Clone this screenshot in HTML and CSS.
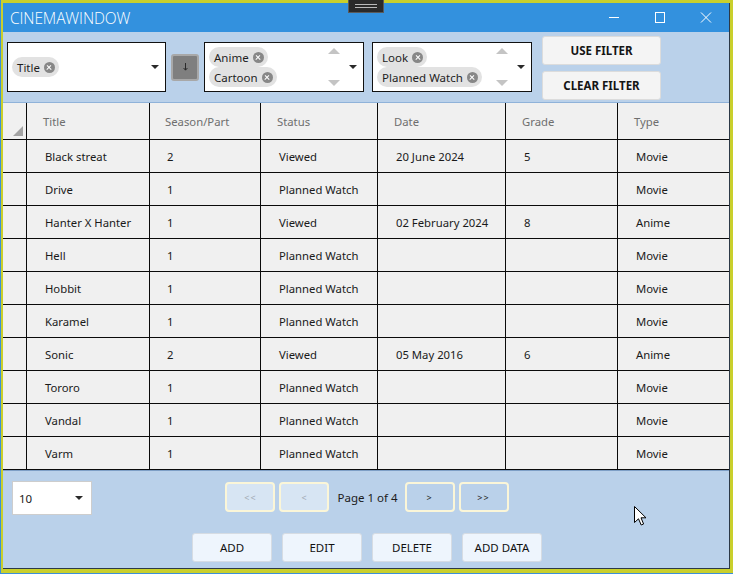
FILE: index.html
```html
<!DOCTYPE html>
<html>
<head>
<meta charset="utf-8">
<link rel="stylesheet" href="styles.css">
</head>
<body>
<div class="outer">
  <div class="window">
    <div class="grip"><span></span><span></span></div>
    <div class="titlebar">
      <div class="title">CINEMAWINDOW</div>
      <div class="controls">
        <svg class="ctl" width="46" height="29" viewBox="0 0 46 29"><line x1="18" y1="14.5" x2="28" y2="14.5" stroke="#fff" stroke-width="1"/></svg>
        <svg class="ctl" width="46" height="29" viewBox="0 0 46 29"><rect x="18.5" y="9.5" width="9" height="10" fill="none" stroke="#fff" stroke-width="1"/></svg>
        <svg class="ctl" width="46" height="29" viewBox="0 0 46 29"><path d="M18 9.5 L28 19.5 M28 9.5 L18 19.5" stroke="#fff" stroke-width="1"/></svg>
      </div>
    </div>

    <div class="filters">
      <div class="combo c1">
        <div class="chips single">
          <span class="chip">Title<i class="x"></i></span>
        </div>
        <span class="drop"></span>
      </div>
      <div class="sortbtn"><svg width="5" height="8" viewBox="0 0 5 8"><path d="M2.5 0 V7 M0.6 5 L2.5 7.2 L4.4 5" fill="none" stroke="#2a2a2a" stroke-width="1"/></svg></div>
      <div class="combo c2">
        <div class="chips">
          <span class="chip">Anime<i class="x"></i></span>
          <span class="chip">Cartoon<i class="x"></i></span>
        </div>
        <div class="scroll"><span class="up"></span><span class="down"></span></div>
        <span class="drop"></span>
      </div>
      <div class="combo c3">
        <div class="chips">
          <span class="chip">Look<i class="x"></i></span>
          <span class="chip">Planned Watch<i class="x"></i></span>
        </div>
        <div class="scroll"><span class="up"></span><span class="down"></span></div>
        <span class="drop"></span>
      </div>
      <div class="fbtns">
        <div class="fbtn">USE FILTER</div>
        <div class="fbtn">CLEAR FILTER</div>
      </div>
    </div>

    <div class="grid">
      <div class="cell hd corner"><svg width="10" height="10" viewBox="0 0 10 10"><polygon points="10,0 10,10 0,10" fill="#a3a3a3"/></svg></div>
      <div class="cell hd">Title</div>
      <div class="cell hd c-sp">Season/Part</div>
      <div class="cell hd">Status</div>
      <div class="cell hd">Date</div>
      <div class="cell hd">Grade</div>
      <div class="cell hd">Type</div>

      <div class="cell rh"></div><div class="cell">Black streat</div><div class="cell c-sp">2</div><div class="cell">Viewed</div><div class="cell">20 June 2024</div><div class="cell">5</div><div class="cell">Movie</div>
      <div class="cell rh"></div><div class="cell">Drive</div><div class="cell c-sp">1</div><div class="cell">Planned Watch</div><div class="cell"></div><div class="cell"></div><div class="cell">Movie</div>
      <div class="cell rh"></div><div class="cell">Hanter X Hanter</div><div class="cell c-sp">1</div><div class="cell">Viewed</div><div class="cell">02 February 2024</div><div class="cell">8</div><div class="cell">Anime</div>
      <div class="cell rh"></div><div class="cell">Hell</div><div class="cell c-sp">1</div><div class="cell">Planned Watch</div><div class="cell"></div><div class="cell"></div><div class="cell">Movie</div>
      <div class="cell rh"></div><div class="cell">Hobbit</div><div class="cell c-sp">1</div><div class="cell">Planned Watch</div><div class="cell"></div><div class="cell"></div><div class="cell">Movie</div>
      <div class="cell rh"></div><div class="cell">Karamel</div><div class="cell c-sp">1</div><div class="cell">Planned Watch</div><div class="cell"></div><div class="cell"></div><div class="cell">Movie</div>
      <div class="cell rh"></div><div class="cell">Sonic</div><div class="cell c-sp">2</div><div class="cell">Viewed</div><div class="cell">05 May 2016</div><div class="cell">6</div><div class="cell">Anime</div>
      <div class="cell rh"></div><div class="cell">Tororo</div><div class="cell c-sp">1</div><div class="cell">Planned Watch</div><div class="cell"></div><div class="cell"></div><div class="cell">Movie</div>
      <div class="cell rh"></div><div class="cell">Vandal</div><div class="cell c-sp">1</div><div class="cell">Planned Watch</div><div class="cell"></div><div class="cell"></div><div class="cell">Movie</div>
      <div class="cell rh"></div><div class="cell">Varm</div><div class="cell c-sp">1</div><div class="cell">Planned Watch</div><div class="cell"></div><div class="cell"></div><div class="cell">Movie</div>
    </div>

    <div class="bottom">
      <div class="row1">
        <div class="pagesize"><span>10</span><span class="drop"></span></div>
        <div class="pager">
          <div class="pbtn off">&lt;&lt;</div>
          <div class="pbtn off">&lt;</div>
          <div class="ptext">Page 1 of 4</div>
          <div class="pbtn">&gt;</div>
          <div class="pbtn">&gt;&gt;</div>
        </div>
        <div></div>
      </div>
      <div class="row2">
        <div class="abtn">ADD</div>
        <div class="abtn">EDIT</div>
        <div class="abtn">DELETE</div>
        <div class="abtn">ADD DATA</div>
      </div>
    </div>

    <svg class="cursor" width="13" height="20" viewBox="0 0 13 20"><path d="M0.5 0.5 L0.5 16.5 L4.5 12.8 L7.2 19 L9.6 18 L7 11.8 L12 11.8 Z" fill="#fff" stroke="#000" stroke-width="1" stroke-linejoin="round"/></svg>
  </div>
</div>
</body>
</html>
```

FILE: styles.css
```css
* { box-sizing: border-box; }
html, body { margin: 0; padding: 0; }
body {
  width: 733px;
  height: 574px;
  overflow: hidden;
  font-family: "Noto Sans", "Open Sans", sans-serif;
  font-size: 11px;
  color: #1b1b1b;
}
.outer {
  width: 733px;
  height: 574px;
  background: #c9cf2c;
  border-left: 1px solid #3b8fd9;
  border-bottom: 1px solid #3b8fd9;
  padding: 3px 3px 4px 2px;
}
.window {
  position: relative;
  width: 727px;
  height: 566px;
  background: #bad1ea;
  border-bottom: 1px solid #2c3947;
  border-right: 1px solid #2c3947;
  display: flex;
  flex-direction: column;
}
.grip {
  position: absolute;
  left: 345px;
  top: -3px;
  width: 36px;
  height: 13px;
  background: #2a2a2a;
  border: 1px solid #5a5a5a;
  border-top: none;
  display: flex;
  flex-direction: column;
  align-items: center;
  justify-content: center;
  gap: 2px;
  z-index: 3;
}
.grip span { display: block; width: 22px; height: 1px; background: #b9b9b9; }

.titlebar {
  height: 29px;
  background: #3391de;
  display: flex;
  align-items: center;
  justify-content: space-between;
  flex: none;
}
.title {
  color: #fff;
  font-family: "Open Sans", sans-serif;
  font-size: 15.5px;
  font-weight: 300;
  padding-left: 7px;
  letter-spacing: -0.1px;
}
.controls { display: flex; }
.ctl { display: block; }

.filters {
  height: 70px;
  flex: none;
  display: flex;
  align-items: center;
  padding-left: 4px;
}
.combo {
  position: relative;
  width: 159px;
  height: 50px;
  background: #fff;
  border: 1px solid #111;
  display: flex;
  align-items: center;
  padding-left: 4px;
}
.c2, .c3 { width: 160px; }
.c1 { margin-right: 5px; }
.c2 { margin-right: 8px; margin-left: 5px; }
.c3 { margin-right: 10px; }
.chips { display: flex; flex-direction: column; align-items: flex-start; }
.chip {
  display: inline-flex;
  align-items: center;
  height: 20px;
  background: #e2e2e2;
  border-radius: 10px;
  padding: 0 4px 0 5px;
  font-size: 11.5px;
  color: #1e1e1e;
}
.chip .x {
  display: inline-block;
  position: relative;
  width: 11px;
  height: 11px;
  border-radius: 50%;
  background: #878787;
  margin-left: 4px;
}
.chip .x::before, .chip .x::after {
  content: "";
  position: absolute;
  left: 2.5px;
  top: 5px;
  width: 6px;
  height: 1.4px;
  background: #fff;
  transform: rotate(45deg);
}
.chip .x::after { transform: rotate(-45deg); }
.drop {
  position: absolute;
  right: 6px;
  top: 22px;
  width: 0;
  height: 0;
  border-left: 4px solid transparent;
  border-right: 4px solid transparent;
  border-top: 4px solid #2a2a2a;
}
.scroll {
  position: absolute;
  right: 23px;
  top: 5px;
  height: 38px;
  display: flex;
  flex-direction: column;
  justify-content: space-between;
}
.scroll .up {
  width: 0; height: 0;
  border-left: 6px solid transparent;
  border-right: 6px solid transparent;
  border-bottom: 6px solid #c4c4c4;
}
.scroll .down {
  width: 0; height: 0;
  border-left: 6px solid transparent;
  border-right: 6px solid transparent;
  border-top: 6px solid #c4c4c4;
}
.sortbtn {
  width: 28px;
  height: 27px;
  background: #7f7f7f;
  border: 2px solid #a8a8a8;
  border-radius: 3px;
  display: flex;
  align-items: center;
  justify-content: center;
}
.sortbtn svg { display: block; }
.fbtns { display: flex; flex-direction: column; gap: 6px; padding-top: 1px; }
.fbtn {
  width: 119px;
  height: 29px;
  background: #f4f4f4;
  border: 1px solid #dcdcdc;
  border-radius: 3px;
  display: flex;
  align-items: center;
  justify-content: center;
  font-weight: 700;
  font-size: 11.5px;
  color: #151515;
}

.grid {
  flex: none;
  display: grid;
  grid-template-columns: 24px 123px 111px 117px 128px 112px 111px;
  grid-template-rows: 37px repeat(10, 33px);
  border-top: 1px solid #8fb2d9;
  background: #f0f0f0;
}
.cell {
  border-right: 1px solid #0a0a0a;
  border-bottom: 1px solid #0a0a0a;
  display: flex;
  align-items: center;
  padding-left: 18px;
  padding-top: 1px;
  white-space: nowrap;
  font-size: 11.3px;
  color: #1a1a1a;
}
.cell:nth-child(7n) { border-right: none; }
.hd { color: #6e6e6e; padding-left: 16px; padding-top: 0; }
.c-sp { padding-left: 17px; }
.hd.c-sp { padding-left: 15px; }
.corner { padding: 0 3px 3px 0; align-items: flex-end; justify-content: flex-end; }
.corner svg { display: block; }
.rh { padding: 0; }

.bottom {
  flex: 1;
  border-top: 1px solid #7e9fc6;
  padding: 10px 0 0 9px;
}
.row1 {
  display: grid;
  grid-template-columns: 1fr auto 1fr;
  align-items: center;
  height: 34px;
  margin-left: -9px;
  padding-left: 9px;
}
.pagesize {
  position: relative;
  width: 80px;
  height: 34px;
  background: #fff;
  border: 1px solid #cdcdcd;
  display: flex;
  align-items: center;
  padding-left: 6px;
  font-size: 11.5px;
  justify-self: start;
}
.pagesize .drop { right: 8px; top: 14px; }
.pager {
  display: flex;
  align-items: center;
  gap: 4px;
  margin-top: -2px;
  margin-left: -7px;
}
.pbtn {
  width: 50px;
  height: 30px;
  border: 2px solid #fbf6d8;
  border-radius: 4px;
  display: flex;
  align-items: center;
  justify-content: center;
  font-size: 9px;
  color: #222;
  letter-spacing: 1px;
}
.pbtn.off { background: #d7e5f3; color: #a3aab3; }
.ptext { font-size: 11.5px; padding: 0 3px 0 4px; color: #1b1b1b; }
.row2 {
  display: flex;
  justify-content: center;
  gap: 10px;
  margin-top: 18px;
  margin-left: -7px;
}
.abtn {
  width: 80px;
  height: 29px;
  background: #eef5fd;
  border: 1px solid #d6dce3;
  border-radius: 3px;
  display: flex;
  align-items: center;
  justify-content: center;
  font-size: 11.5px;
  color: #111;
}
.cursor {
  position: absolute;
  left: 631px;
  top: 503px;
  z-index: 4;
}
```
